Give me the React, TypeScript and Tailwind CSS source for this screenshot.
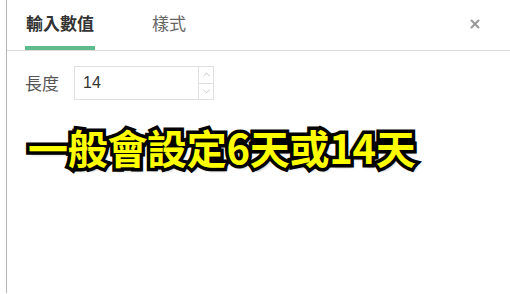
import { ChevronUp, ChevronDown, X } from "lucide-react"

const font = "font-['Noto_Sans_CJK_TC','Noto_Sans',sans-serif]"

export default function App() {
    return (
        <div className={`h-[294px] w-[510px] overflow-hidden bg-white ${font}`}>
            <div className="ml-[6px] flex h-[293px] flex-col border-l-[1.5px] border-[#b5b5b5]">
                {/* tabs */}
                <div className="flex h-[51px] items-stretch border-b border-[#dcdcdc] pl-[18px] pr-[28px]">
                    <div className="relative flex w-[70px] items-center justify-center">
                        <span className="mt-[-4px] text-[17px] font-bold text-[#333]">輸入數值</span>
                        <span className="absolute bottom-0 left-0 h-[4px] w-[70px] bg-[#5dba8a]" />
                    </div>
                    <div className="ml-[57px] flex items-center">
                        <span className="mt-[-4px] text-[17px] text-[#666]">樣式</span>
                    </div>
                    <div className="ml-auto flex items-center">
                        <X className="mt-[-2px] h-[14px] w-[14px] text-[#999]" strokeWidth={3.5} />
                    </div>
                </div>

                {/* length field */}
                <div className="flex items-center pl-[18px] pt-[15px]">
                    <span className="text-[17px] text-[#555]">長度</span>
                    <div className="ml-[15px] flex h-[34px] w-[140px] border border-[#e0e0e0]">
                        <div className="flex flex-1 items-center pl-[8px] font-['Liberation_Sans',sans-serif] text-[16px] text-[#333]">
                            14
                        </div>
                        <div className="flex w-[15px] flex-col border-l border-[#e0e0e0]">
                            <div className="flex flex-1 items-center justify-center border-b border-[#e0e0e0]">
                                <ChevronUp className="h-[11px] w-[11px] text-[#aaa]" strokeWidth={1.5} />
                            </div>
                            <div className="flex flex-1 items-center justify-center">
                                <ChevronDown className="h-[11px] w-[11px] text-[#aaa]" strokeWidth={1.5} />
                            </div>
                        </div>
                    </div>
                </div>

                {/* caption */}
                <div className="pl-[21px] pt-[27px]">
                    <span className="text-[40px] font-bold leading-none tracking-[-0.3px] text-[#ffff00] [-webkit-text-stroke:7px_black] [paint-order:stroke_fill] [text-shadow:2px_3px_3px_rgba(0,0,0,0.45)]">
                        一般會設定6天或14天
                    </span>
                </div>
            </div>
        </div>
    )
}
